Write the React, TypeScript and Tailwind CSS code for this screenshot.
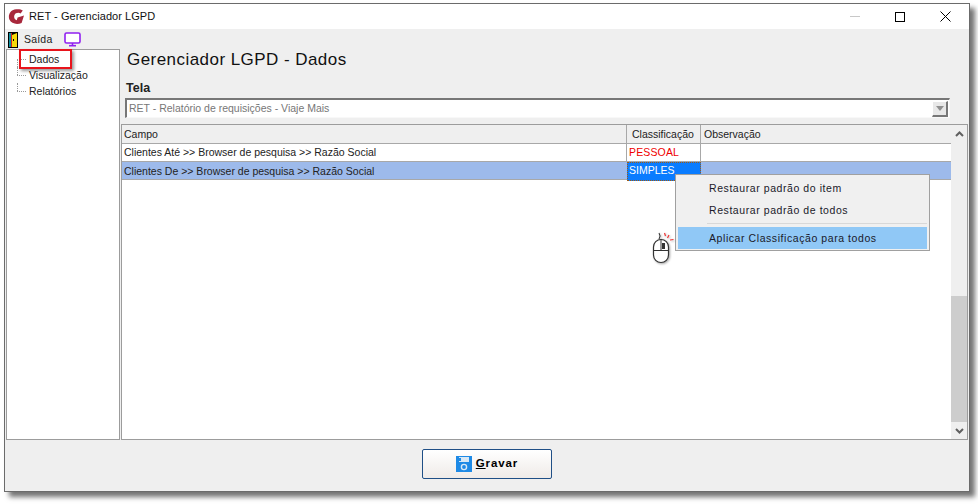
const font = { fontFamily: '"Liberation Sans", sans-serif' };

function Logo() {
  return (
    <svg width="17" height="17" viewBox="0 0 17 17" className="shrink-0">
      <path d="M14.8 2.6 L12.6 5.4 C10.6 4.2 7.4 4.6 6.4 7.2 C5.6 9.6 6.8 11.8 8.8 12.2 L9.6 9.6 L16 7.4 L13.6 15 C9.2 16.8 3.4 16 1.4 11.6 C-0.2 7.6 2 2.8 6.4 1.6 C9.4 0.8 12.8 1 14.8 2.6 Z" fill="#a8283c" />
    </svg>
  );
}

function Door() {
  return (
    <svg width="10" height="16" viewBox="0 0 10 16" className="shrink-0">
      <rect x="0" y="0" width="10" height="16" fill="#000" />
      <rect x="1" y="1" width="2" height="14" fill="#0f8f9f" />
      <rect x="3" y="1" width="1" height="14" fill="#d02020" />
      <path d="M4 3 L9 1 V15 H4 Z" fill="#f5d90a" />
      <rect x="5" y="7" width="1" height="2" fill="#000" />
    </svg>
  );
}

function Monitor() {
  return (
    <svg width="17" height="15" viewBox="0 0 17 15" className="shrink-0">
      <rect x="1" y="1" width="15" height="10" rx="1.5" fill="#fff" stroke="#9020f0" strokeWidth="1.6" />
      <path d="M5 13.7 H12" stroke="#9020f0" strokeWidth="1.6" />
      <path d="M8.5 11 V14" stroke="#9020f0" strokeWidth="1.6" />
    </svg>
  );
}

function Disk() {
  return (
    <svg width="16" height="16" viewBox="0 0 16 16" className="shrink-0">
      <path d="M0 0 H16 V16 H0 Z" fill="#1e8ae6" />
      <rect x="3" y="1" width="10" height="5" fill="#d8e8f5" />
      <rect x="3" y="2" width="2" height="3" fill="#1e8ae6" />
      <circle cx="8" cy="11" r="2.6" fill="none" stroke="#d8e8f5" strokeWidth="1.4" />
    </svg>
  );
}

function Mouse() {
  return (
    <svg width="24" height="34" viewBox="0 0 24 34" className="drop-shadow-[1px_1px_1px_rgba(0,0,0,0.35)]">
      <rect x="1.5" y="9.5" width="15" height="23" rx="7.5" fill="#fff" stroke="#333" strokeWidth="1.2" />
      <path d="M1.5 20.5 H16.5 M9 9.5 V20.5" stroke="#333" strokeWidth="1" />
      <rect x="10" y="13" width="3" height="6" fill="#333" />
      <path d="M7 9 C8 7 9 6 7 3" fill="none" stroke="#333" strokeWidth="1.1" />
      <path d="M12.5 3 L13.5 6 M17 5 L15.5 8 M18 10 L21.5 9.5" stroke="#e33" strokeWidth="1.2" />
    </svg>
  );
}

function TreeItem({ label, first }: { label: string; first?: boolean }) {
  return (
    <div className="flex h-4 items-center">
      <span className="relative mr-[1px] h-4 w-[10px] shrink-0">
        <span className={`absolute left-0 border-l border-dotted border-[#999] ${first ? "top-2 h-2" : "top-0 h-2"}`} />
        <span className="absolute left-0 top-2 w-[9px] border-t border-dotted border-[#999]" />
      </span>
      <span className="whitespace-nowrap px-[1px] text-[10.5px] leading-4 text-[#222]">{label}</span>
    </div>
  );
}

export default function App() {
  return (
    <div className="h-[504px] w-[978px] overflow-hidden bg-white pl-[4px] pt-[3px]" style={font}>
      <div className="relative flex h-[489px] w-[966px] flex-col border border-[#6b6b6b] bg-[#efefef] shadow-[5px_5px_5px_rgba(0,0,0,0.55)]">
        {/* Title bar */}
        <div className="flex h-[25px] shrink-0 items-center bg-white pl-[3px]">
          <Logo />
          <span className="ml-[4px] text-[11px] tracking-[0.05px] text-[#111]">RET - Gerenciador LGPD</span>
          <div className="ml-auto flex items-center">
            <span className="mr-[35px] h-px w-[10px] bg-[#c8c8c8]" />
            <span className="mr-[35px] h-[10px] w-[10px] border border-black" />
            <svg width="11" height="11" viewBox="0 0 11 11" className="mr-[18px]">
              <path d="M0.5 0.5 L10.5 10.5 M10.5 0.5 L0.5 10.5" stroke="#000" strokeWidth="1" />
            </svg>
          </div>
        </div>

        {/* Toolbar */}
        <div className="flex h-[19px] shrink-0 items-center pl-[3px] pt-[2px]">
          <Door />
          <span className="ml-[6px] text-[10.5px] tracking-[0.2px] text-[#222]">Saída</span>
          <span className="ml-[12px]"><Monitor /></span>
        </div>

        {/* Body */}
        <div className="flex min-h-0 flex-1 pl-[1px] pr-[1px]">
          <div className="relative mr-[1px] mt-[1px] w-[114px] shrink-0 border border-[#9c9c9c] bg-white pl-[10px] pt-[1px]">
            <TreeItem label="Dados" first />
            <TreeItem label="Visualização" />
            <TreeItem label="Relatórios" />
            {/* Red highlight */}
            <div className="absolute -top-px left-[12px] h-[20px] w-[53px] border-2 border-[#e8141c] shadow-[2px_2px_3px_rgba(0,0,0,0.4)]" />
          </div>

          <div className="flex min-w-0 flex-1 flex-col">
            <h1 className="ml-[6px] mt-[1px] h-[22px] text-[17px] font-normal leading-[22px] tracking-[0.45px] text-[#111]">Gerenciador LGPD - Dados</h1>
            <div className="ml-[5px] mt-[11px] h-[13px] text-[12.5px] font-bold leading-[13px] text-[#222]">Tela</div>

            {/* Combo */}
            <div className="ml-[4px] mr-[18px] mt-[3px] flex h-[20px] shrink-0 items-center border-b border-l-2 border-r border-t-2 border-b-[#f8f8f8] border-l-[#777] border-r-[#f8f8f8] border-t-[#777] bg-white pl-[2px] pr-[1px]">
              <span className="pt-[1px] text-[10.5px] text-[#777]">RET - Relatório de requisições - Viaje Mais</span>
              <span className="ml-auto flex h-[16px] w-[16px] items-center justify-center border-b-2 border-l border-r-2 border-t border-b-[#777] border-l-white border-r-[#777] border-t-white bg-[#e8e8e8]">
                <svg width="8" height="5" viewBox="0 0 8 5"><path d="M0 0 H8 L4 5 Z" fill="#909090" /></svg>
              </span>
            </div>

            {/* Grid */}
            <div className="relative mt-[6px] flex min-h-0 flex-1 border border-[#9c9c9c] bg-white">
              <div className="min-w-0 flex-1">
                <div className="grid h-[19px] grid-cols-[505px_74px_1fr] border-b border-[#a8a8a8] bg-[#efefef] text-[10.5px] leading-[18px] text-[#222]">
                  <div className="border-r border-[#a8a8a8] pl-[2px]">Campo</div>
                  <div className="border-r border-[#a8a8a8] pl-[5px]">Classificação</div>
                  <div className="pl-[3px]">Observação</div>
                </div>
                <div className="grid h-[18px] grid-cols-[505px_74px_1fr] border-b border-[#a8a8a8] text-[10.5px] leading-[17px] text-[#222]">
                  <div className="border-r border-[#a8a8a8] pl-[2px]">Clientes Até &gt;&gt; Browser de pesquisa &gt;&gt; Razão Social</div>
                  <div className="border-r border-[#a8a8a8] pl-[2px] tracking-[0.15px] text-[#f00000]">PESSOAL</div>
                  <div />
                </div>
                <div className="grid h-[18px] grid-cols-[505px_74px_1fr] border-b border-[#a8a8a8] bg-[#9dbaeb] text-[10.5px] leading-[19px] text-[#222]">
                  <div className="pl-[2px]">Clientes De &gt;&gt; Browser de pesquisa &gt;&gt; Razão Social</div>
                  <div className="border border-dotted border-[#a05a10] bg-[#0a7cff] pl-[1px] leading-[15px] text-white">SIMPLES</div>
                  <div />
                </div>
              </div>

              {/* Scrollbar */}
              <div className="flex w-[16px] shrink-0 flex-col bg-[#efefef]">
                <div className="flex h-[17px] items-center justify-center">
                  <svg width="9" height="6" viewBox="0 0 9 6"><path d="M1 5 L4.5 1.5 L8 5" fill="none" stroke="#606060" strokeWidth="2" /></svg>
                </div>
                <div className="flex-1" />
                <div className="h-[126px] bg-[#cdcdcd]" />
                <div className="flex h-[17px] items-center justify-center">
                  <svg width="9" height="6" viewBox="0 0 9 6"><path d="M1 1 L4.5 4.5 L8 1" fill="none" stroke="#606060" strokeWidth="2" /></svg>
                </div>
              </div>

              {/* Context menu */}
              <div className="absolute left-[553px] top-[49px] h-[77px] w-[255px] border border-[#a0a0a0] bg-[#f0f0f0] p-[2px] text-[10.5px] text-[#1a1a2a]">
                <div className="flex h-[22px] items-center pl-[31px] pt-[1px] tracking-[0.57px]">Restaurar padrão do item</div>
                <div className="flex h-[22px] items-center pl-[31px] pt-[1px] tracking-[0.57px]">Restaurar padrão de todos</div>
                <div className="my-[2px] ml-[29px] h-px bg-[#d8d8d8]" />
                <div className="mt-[3px] flex h-[22px] items-center bg-[#90c8f6] pl-[31px] pt-[1px] tracking-[0.57px]">Aplicar Classificação para todos</div>
              </div>

              {/* Mouse cursor */}
              <div className="absolute left-[530px] top-[105px]"><Mouse /></div>
            </div>
          </div>
        </div>

        {/* Footer */}
        <div className="flex h-[51px] shrink-0 items-center justify-center pb-[3px]">
          <button className="flex h-[30px] w-[130px] items-center justify-center gap-[4px] rounded-[2px] border border-[#1f4f86] bg-gradient-to-b from-white to-[#efebe8] text-[11.5px] font-bold tracking-[0.9px] text-black">
            <Disk />
            <span><span className="underline">G</span>ravar</span>
          </button>
        </div>
      </div>
    </div>
  );
}
